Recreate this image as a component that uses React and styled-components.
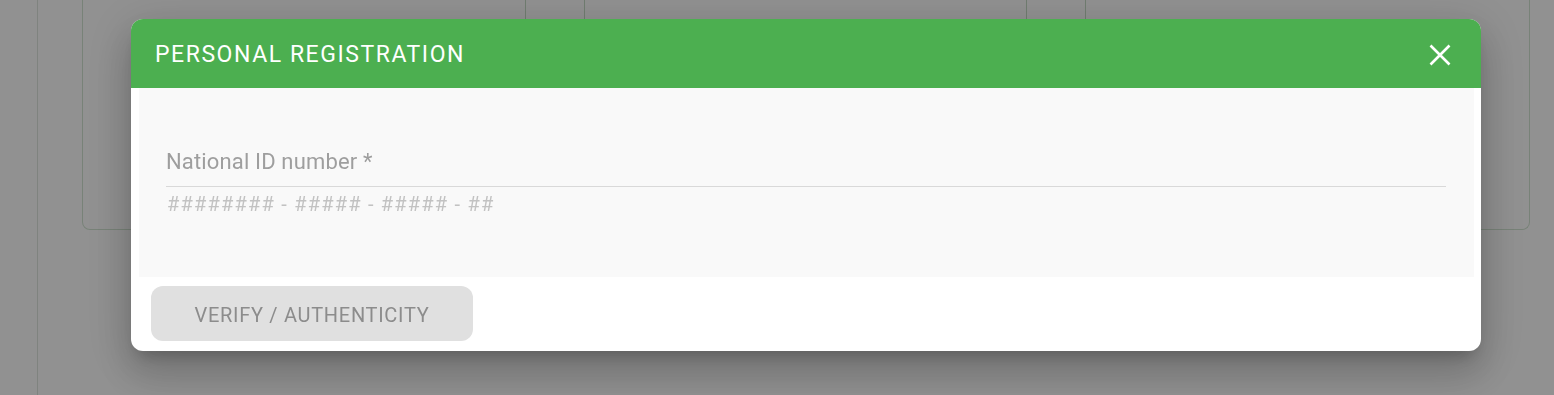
import React from "react";
import styled, { createGlobalStyle } from "styled-components";

const GlobalStyle = createGlobalStyle`
  html, body {
    margin: 0;
    padding: 0;
    background: #ffffff;
    font-family: Roboto, "Liberation Sans", sans-serif;
    overflow: hidden;
  }
`;

const Page = styled.div`
  display: flex;
  height: 395px;
  width: 1554px;
`;

const Sidebar = styled.aside`
  width: 37px;
  flex-shrink: 0;
  border-right: 1px solid #dfe6df;
`;

const Content = styled.main`
  flex: 1;
  padding: 0 24px 0 44px;
`;

const Card = styled.section`
  height: 230px;
  border: 1px solid #d3e5d3;
  border-top: none;
  border-radius: 0 0 8px 8px;
  display: grid;
  grid-template-columns: 443px 59px 442px 59px 1fr;
  box-sizing: border-box;
`;

const Cell = styled.div`
  border-right: ${({ $last }) => ($last ? "none" : "1px solid #c6dcc6")};
`;

const Overlay = styled.div`
  position: fixed;
  inset: 0;
  background: rgba(0, 0, 0, 0.43);
  display: flex;
  align-items: flex-start;
  padding: 19px 0 0 131px;
`;

const Dialog = styled.div`
  width: 1350px;
  background: #ffffff;
  border-radius: 12px;
  overflow: hidden;
  box-shadow: 0 11px 15px -7px rgba(0, 0, 0, 0.2),
    0 24px 38px 3px rgba(0, 0, 0, 0.14), 0 9px 46px 8px rgba(0, 0, 0, 0.12);
`;

const Header = styled.header`
  height: 69px;
  background: #4caf50;
  display: flex;
  align-items: center;
  justify-content: space-between;
  padding: 0 30px 0 24px;
`;

const Title = styled.h2`
  margin: 0;
  color: #ffffff;
  font-size: 23px;
  font-weight: 400;
  letter-spacing: 1.55px;
  padding-top: 1px;
`;

const CloseButton = styled.button`
  border: none;
  background: none;
  padding: 0;
  width: 22px;
  height: 22px;
  display: flex;
  cursor: pointer;
  margin-top: 2px;
`;

const Body = styled.div`
  margin: 0 7px 0 8px;
  background: #f9f9f9;
  height: 189px;
  padding: 58px 28px 0 27px;
  box-sizing: border-box;
`;

const Field = styled.div`
  display: flex;
  flex-direction: column;
`;

const Label = styled.label`
  font-size: 22px;
  letter-spacing: 0.15px;
  color: #9e9e9e;
  line-height: 32px;
  padding-bottom: 8px;
  border-bottom: 1px solid #d9d9d9;
`;

const Placeholder = styled.span`
  font-size: 20px;
  letter-spacing: 1.2px;
  color: #c2c2c2;
  line-height: 34px;
  padding-left: 1px;
`;

const Footer = styled.footer`
  padding: 9px 20px 10px;
  display: flex;
`;

const ActionButton = styled.button`
  width: 322px;
  height: 55px;
  border: none;
  border-radius: 12px;
  background: #e0e0e0;
  color: #8c8c8c;
  font-family: Roboto, "Liberation Sans", sans-serif;
  font-size: 20px;
  font-weight: 400;
  letter-spacing: 0.7px;
  text-transform: uppercase;
  padding-top: 3px;
`;

export default function App() {
  return (
    <>
      <GlobalStyle />
      <Page>
        <Sidebar />
        <Content>
          <Card>
            <Cell />
            <Cell />
            <Cell />
            <Cell />
            <Cell $last />
          </Card>
        </Content>
      </Page>
      <Overlay>
        <Dialog>
          <Header>
            <Title>PERSONAL REGISTRATION</Title>
            <CloseButton aria-label="close">
              <svg width="22" height="22" viewBox="0 0 22 22">
                <path
                  d="M1.5 1.5 L20.5 20.5 M20.5 1.5 L1.5 20.5"
                  stroke="#ffffff"
                  strokeWidth="2.6"
                  fill="none"
                />
              </svg>
            </CloseButton>
          </Header>
          <Body>
            <Field>
              <Label>National ID number *</Label>
              <Placeholder>######## - ##### - ##### - ##</Placeholder>
            </Field>
          </Body>
          <Footer>
            <ActionButton disabled>Verify / Authenticity</ActionButton>
          </Footer>
        </Dialog>
      </Overlay>
    </>
  );
}
